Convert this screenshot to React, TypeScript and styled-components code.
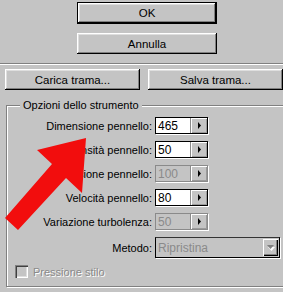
import React from "react";
import styled, { createGlobalStyle } from "styled-components";

const Global = createGlobalStyle`
  html, body { margin: 0; padding: 0; background: #c4c4c4; }
  * { box-sizing: border-box; }
`;

const Page = styled.div`
  position: relative;
  width: 283px;
  height: 292px;
  overflow: hidden;
  background: #c4c4c4;
  font-family: "Liberation Sans", Arial, sans-serif;
  font-size: 11px;
  color: #000;
`;

const TopButtons = styled.div`
  display: flex;
  flex-direction: column;
  gap: 9px;
  padding: 2px 0 0 77px;
`;

const Button = styled.div<{ $default?: boolean; $w: number; $h: number }>`
  width: ${(p) => p.$w}px;
  height: ${(p) => p.$h}px;
  display: flex;
  align-items: center;
  justify-content: center;
  background: #c4c4c4;
  font-size: 11.5px;
  border: ${(p) => (p.$default ? "1px solid #000" : "none")};
  box-shadow: inset -1px -1px 0 #000, inset 1px 1px 0 #fff,
    inset -2px -2px 0 #808080, inset 2px 2px 0 #dedede;
`;

const Separator = styled.div`
  margin-top: 9px;
  height: 2px;
  border-top: 1px solid #808080;
  border-bottom: 1px solid #fff;
`;

const PatternRow = styled.div`
  display: flex;
  gap: 8px;
  padding: 4px 0 0 5px;
`;

const Group = styled.fieldset`
  margin: 9px 0 0 6px;
  width: 300px;
  padding: 5px 0 8px 0;
  border: 1px solid #808080;
  box-shadow: inset 1px 1px 0 #fff, 1px 1px 0 #fff;
`;

const Legend = styled.legend`
  margin-left: 13px;
  padding: 0 3px;
  background: #c4c4c4;
  font-size: 11px;
  line-height: 13px;
`;

const Form = styled.div`
  display: grid;
  grid-template-columns: 145px auto;
  column-gap: 3px;
  row-gap: 7px;
  align-items: center;
`;

const Label = styled.div`
  text-align: right;
  font-size: 11px;
  white-space: nowrap;
`;

const Spin = styled.div<{ $disabled?: boolean }>`
  width: 53px;
  height: 17px;
  display: flex;
  border: 1px solid ${(p) => (p.$disabled ? "#8a8a8a" : "#000")};
  box-shadow: 1px 1px 0 #fff;
`;

const SpinValue = styled.div<{ $disabled?: boolean }>`
  flex: 1;
  display: flex;
  align-items: center;
  padding-left: 2px;
  font-size: 12px;
  background: ${(p) => (p.$disabled ? "#c4c4c4" : "#fff")};
  color: ${(p) => (p.$disabled ? "#8a8a8a" : "#000")};
`;

const SpinButton = styled.div`
  width: 17px;
  display: flex;
  align-items: center;
  justify-content: center;
  background: #c4c4c4;
  border-left: 1px solid #8a8a8a;
  box-shadow: inset 1px 1px 0 #fff, inset -1px -1px 0 #9a9a9a;
`;

const Select = styled.div`
  width: 125px;
  height: 21px;
  display: flex;
  align-items: center;
  justify-content: space-between;
  padding: 0 1px 0 2px;
  border: 1px solid #000;
  border-top-color: #333;
  box-shadow: 1px 1px 0 #fff;
  color: #8a8a8a;
  font-size: 12px;
`;

const SelectButton = styled.div`
  width: 15px;
  height: 17px;
  display: flex;
  align-items: center;
  justify-content: center;
  box-shadow: inset 1px 1px 0 #fff, inset -1px -1px 0 #000,
    inset -2px -2px 0 #808080;
`;

const CheckRow = styled.div`
  display: flex;
  align-items: center;
  gap: 5px;
  padding: 7px 0 0 8px;
`;

const CheckBox = styled.div`
  width: 13px;
  height: 13px;
  background: #c4c4c4;
  box-shadow: inset 1px 1px 0 #808080, inset 2px 2px 0 #404040,
    inset -1px -1px 0 #fff, inset -2px -2px 0 #dedede;
`;

const DisabledText = styled.div`
  color: #8a8a8a;
  font-size: 11px;
  text-shadow: 1px 1px 0 #fff;
`;

const Overlay = styled.svg`
  position: absolute;
  left: 0;
  top: 0;
  pointer-events: none;
`;

const SmallArrow = () => (
  <svg width="5" height="7" viewBox="0 0 5 7">
    <path d="M1 0 L4 3.5 L1 7 Z" fill="#000" />
  </svg>
);

const DownArrow = () => (
  <svg width="9" height="6" viewBox="0 0 9 6">
    <path d="M1 1 L8 1 L4.5 5 Z" fill="#fff" transform="translate(1,1)" />
    <path d="M0 0 L7 0 L3.5 4 Z" fill="#808080" transform="translate(1,0)" />
  </svg>
);

const rows: { label: string; value: string; disabled?: boolean }[] = [
  { label: "Dimensione pennello:", value: "465" },
  { label: "Densità pennello:", value: "50" },
  { label: "Pressione pennello:", value: "100", disabled: true },
  { label: "Velocità pennello:", value: "80" },
  { label: "Variazione turbolenza:", value: "50", disabled: true },
];

export default function App() {
  return (
    <Page>
      <Global />
      <TopButtons>
        <Button $default $w={140} $h={22}>OK</Button>
        <Button $w={140} $h={21}>Annulla</Button>
      </TopButtons>
      <Separator />
      <PatternRow>
        <Button $w={140} $h={21}>Carica trama...</Button>
        <Button $w={140} $h={21}>Salva trama...</Button>
      </PatternRow>
      <Group>
        <Legend>Opzioni dello strumento</Legend>
        <Form>
          {rows.map((r) => (
            <React.Fragment key={r.label}>
              <Label>{r.label}</Label>
              <Spin $disabled={r.disabled}>
                <SpinValue $disabled={r.disabled}>{r.value}</SpinValue>
                <SpinButton>
                  <SmallArrow />
                </SpinButton>
              </Spin>
            </React.Fragment>
          ))}
          <Label>Metodo:</Label>
          <Select>
            <span>Ripristina</span>
            <SelectButton>
              <DownArrow />
            </SelectButton>
          </Select>
        </Form>
        <CheckRow>
          <CheckBox />
          <DisabledText>Pressione stilo</DisabledText>
        </CheckRow>
      </Group>
      <Overlay width="283" height="292" viewBox="0 0 283 292">
        <polygon
          points="86,138 37,150 52,164 5,218 18,230 66,178 82,193"
          fill="#f20d0d"
        />
      </Overlay>
    </Page>
  );
}
